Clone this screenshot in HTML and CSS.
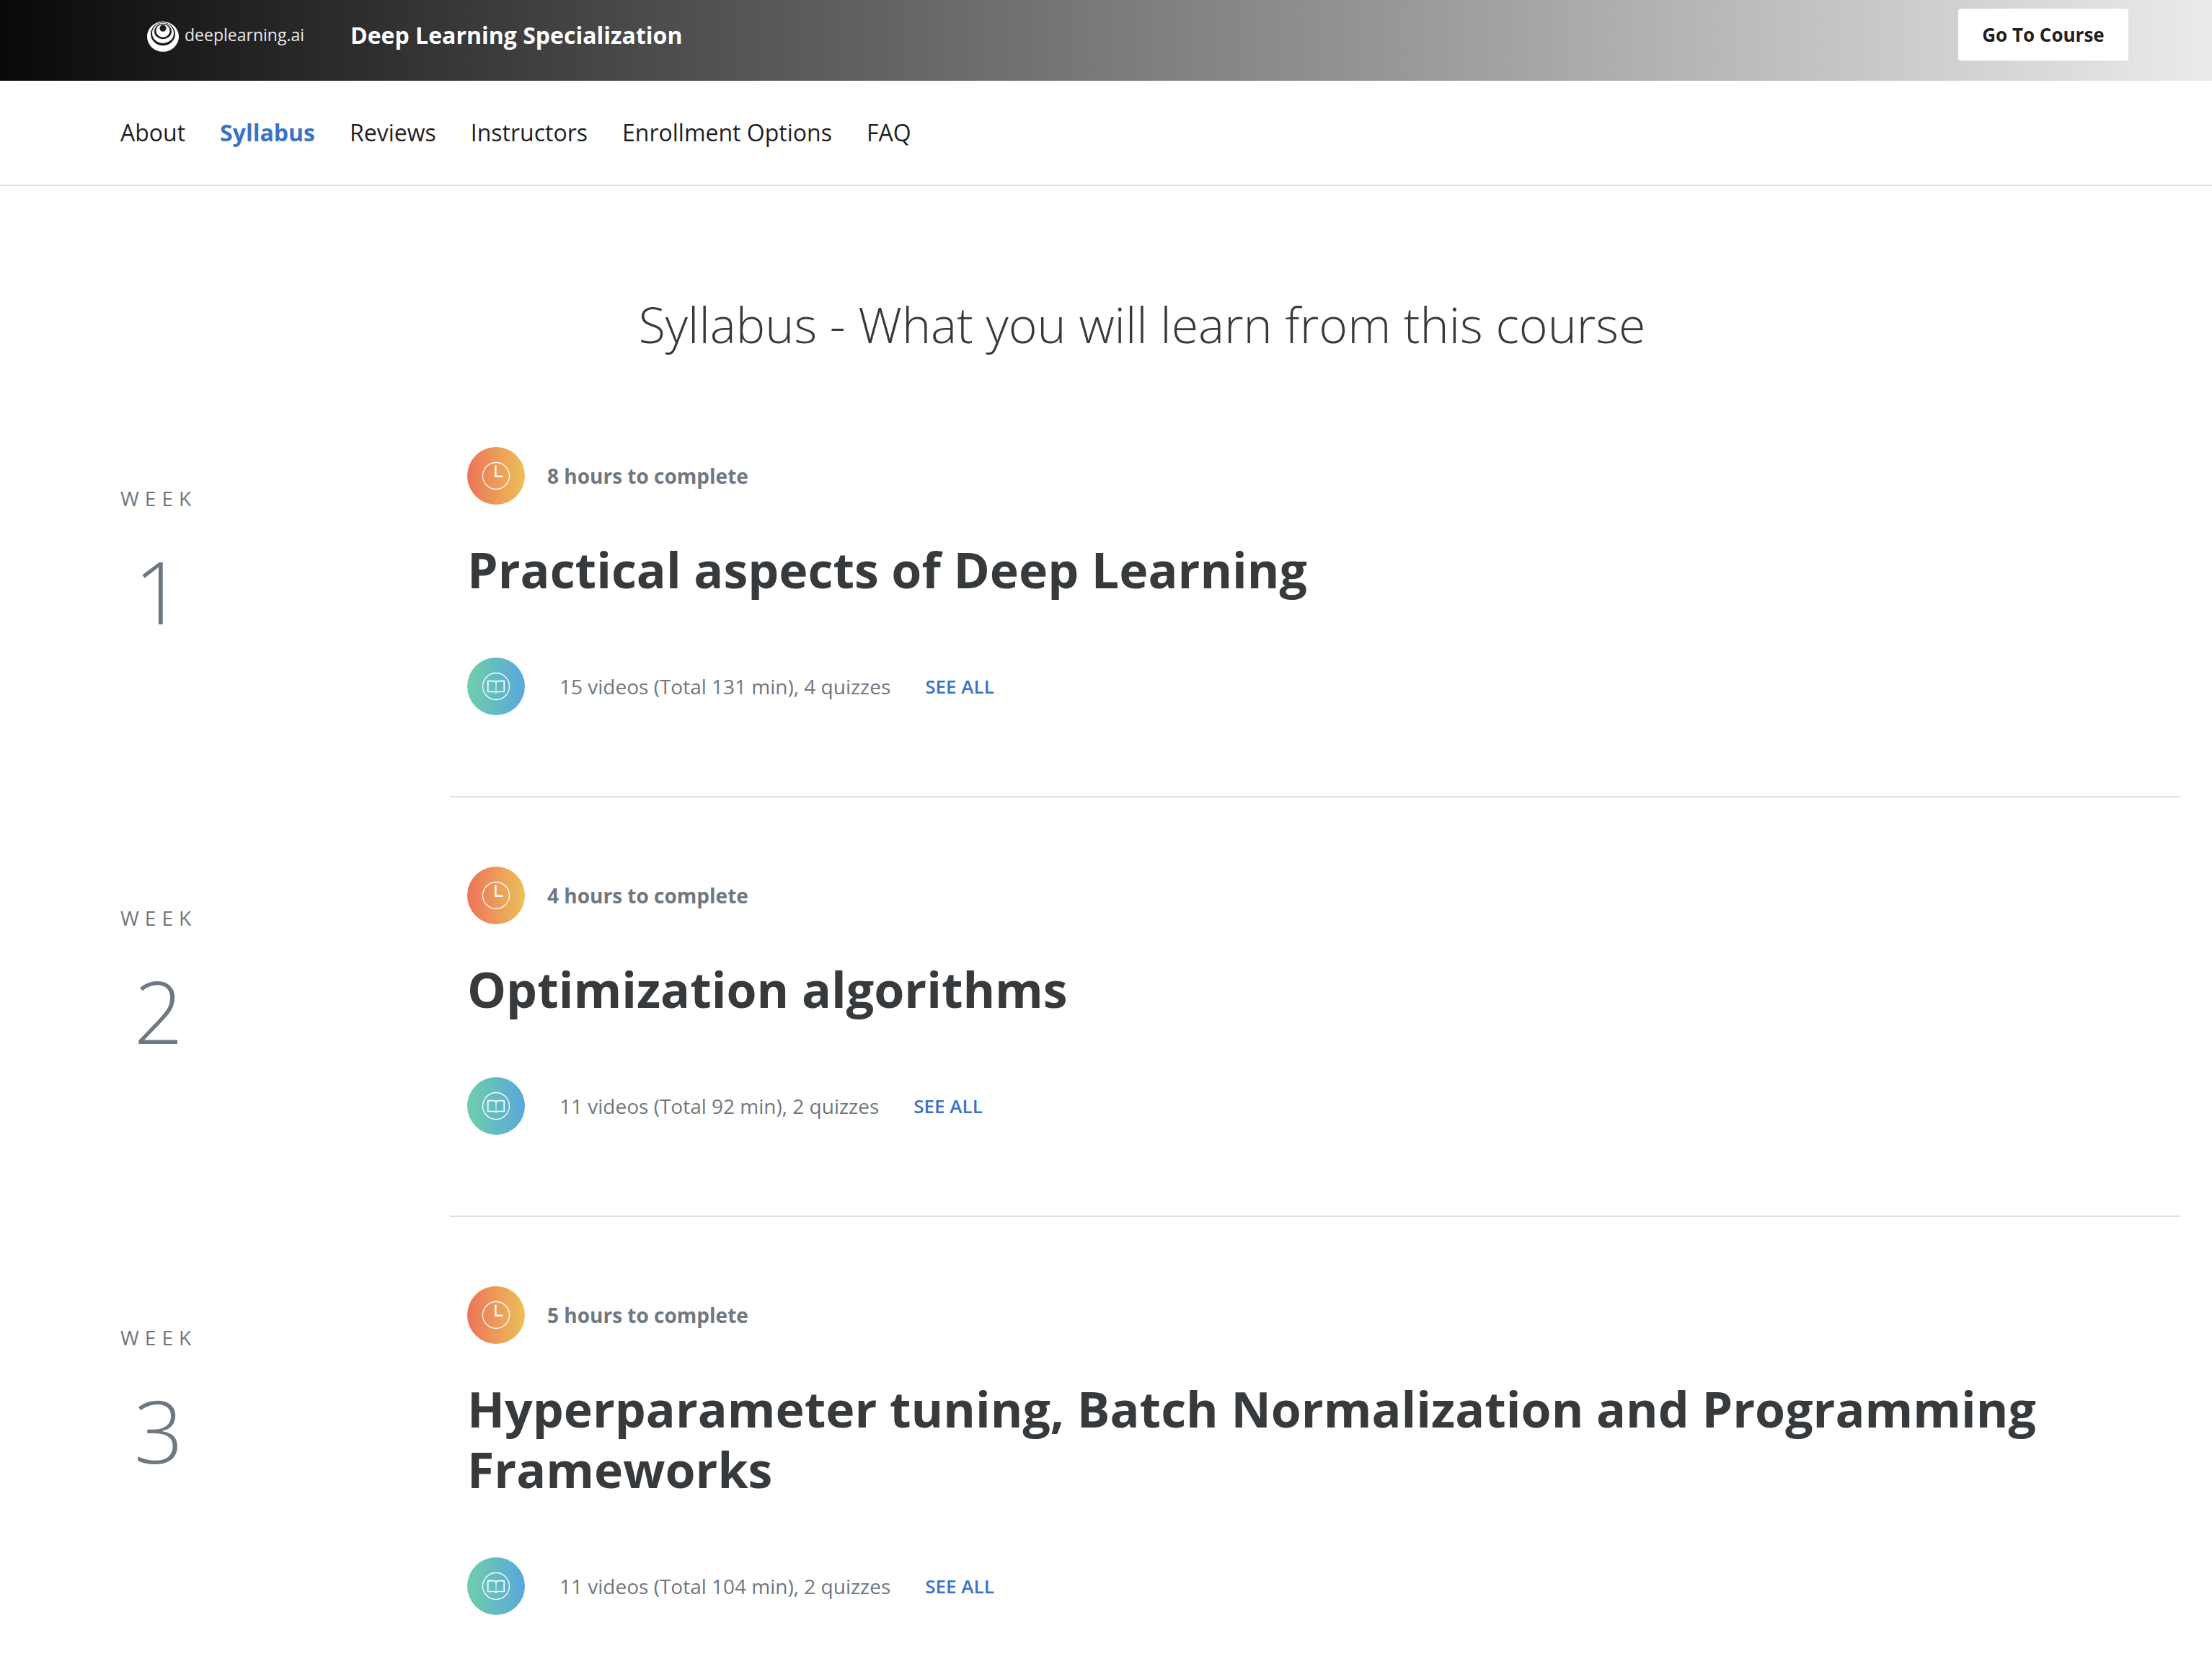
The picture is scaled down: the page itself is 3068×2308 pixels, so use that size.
FILE: index.html
```html
<!DOCTYPE html>
<html lang="en">
<head>
<meta charset="utf-8">
<meta name="viewport" content="width=device-width, initial-scale=1">
<title>Deep Learning Specialization</title>
<link rel="stylesheet" href="styles.css">
</head>
<body>
<svg class="sprite" width="0" height="0" aria-hidden="true">
  <symbol id="clock" viewBox="0 0 80 80">
    <circle cx="40" cy="40" r="18.5" fill="none" stroke="currentColor" stroke-width="1.3"/>
    <path d="M39.4 25.5V40.8H49.5" fill="none" stroke="currentColor" stroke-width="2.4"/>
  </symbol>
  <symbol id="book" viewBox="0 0 80 80">
    <circle cx="40" cy="40" r="18.5" fill="none" stroke="currentColor" stroke-width="1.3"/>
    <path d="M40 34.5Q39.4 32.6 37 32.6H28.8V47.5H37.6Q39.4 47.5 40 48.6Q40.6 47.5 42.4 47.5H51.2V32.6H43Q40.6 32.6 40 34.5Z" fill="none" stroke="currentColor" stroke-width="1.6"/>
    <path d="M40 34V48" stroke="currentColor" stroke-width="1"/>
  </symbol>
</svg>

<header class="banner">
  <a class="brand" href="#">
    <svg class="brand-mark" viewBox="0 0 44 48" aria-hidden="true">
      <ellipse cx="22" cy="26.8" rx="22" ry="21" fill="#fff"/>
      <ellipse cx="22" cy="23.1" rx="17" ry="16.2" fill="#1c1c1c"/>
      <ellipse cx="22" cy="21.9" rx="15" ry="14.1" fill="#fff"/>
      <ellipse cx="22" cy="19.5" rx="12" ry="10.7" fill="#1c1c1c"/>
      <ellipse cx="22" cy="18.7" rx="9.6" ry="9" fill="#fff"/>
      <circle cx="22" cy="15.2" r="4.6" fill="#1c1c1c"/>
    </svg>
    <span>deeplearning.ai</span>
  </a>
  <span class="banner-title">Deep Learning Specialization</span>
  <button class="enroll" type="button">Go To Course</button>
</header>

<nav class="tabs">
  <a href="#">About</a>
  <a class="active" href="#syllabus" aria-current="true">Syllabus</a>
  <a href="#">Reviews</a>
  <a href="#">Instructors</a>
  <a href="#">Enrollment Options</a>
  <a href="#">FAQ</a>
</nav>

<main class="syllabus" id="syllabus">
  <h1>Syllabus - What you will learn from this course</h1>

  <section class="week">
    <div class="week-label"><span class="week-word">WEEK</span><span class="week-number">1</span></div>
    <div class="module">
      <div class="line duration"><svg class="icon warm" aria-hidden="true"><use href="#clock"/></svg><span>8 hours to complete</span></div>
      <h2>Practical aspects of Deep Learning</h2>
      <div class="line contents"><svg class="icon cool" aria-hidden="true"><use href="#book"/></svg><span>15 videos (Total 131 min), 4 quizzes</span><button class="see-all" type="button">SEE ALL</button></div>
    </div>
  </section>

  <section class="week">
    <div class="week-label"><span class="week-word">WEEK</span><span class="week-number">2</span></div>
    <div class="module">
      <div class="line duration"><svg class="icon warm" aria-hidden="true"><use href="#clock"/></svg><span>4 hours to complete</span></div>
      <h2>Optimization algorithms</h2>
      <div class="line contents"><svg class="icon cool" aria-hidden="true"><use href="#book"/></svg><span>11 videos (Total 92 min), 2 quizzes</span><button class="see-all" type="button">SEE ALL</button></div>
    </div>
  </section>

  <section class="week">
    <div class="week-label"><span class="week-word">WEEK</span><span class="week-number">3</span></div>
    <div class="module">
      <div class="line duration"><svg class="icon warm" aria-hidden="true"><use href="#clock"/></svg><span>5 hours to complete</span></div>
      <h2>Hyperparameter tuning, Batch Normalization and Programming Frameworks</h2>
      <div class="line contents"><svg class="icon cool" aria-hidden="true"><use href="#book"/></svg><span>11 videos (Total 104 min), 2 quizzes</span><button class="see-all" type="button">SEE ALL</button></div>
    </div>
  </section>
</main>
</body>
</html>
```
FILE: styles.css
```css
* { box-sizing: border-box; }

body {
  margin: 0;
  background: #fff;
  color: #1f1f1f;
  font-family: "Open Sans", "Noto Sans", sans-serif;
  font-size: 28px;
}

a { color: inherit; text-decoration: none; }
button { border: 0; font-family: inherit; cursor: pointer; }
.sprite { display: block; position: absolute; }

.banner {
  display: flex;
  align-items: center;
  padding: 12px 116px 28px 204px;
  background: linear-gradient(90deg, #090909, #ebebeb);
  color: #fff;
}

.brand {
  display: flex;
  align-items: center;
  gap: 8px;
  font-size: 23px;
  font-weight: 400;
  margin-right: 64px;
}
.brand span { color: #e8e8e8; }
.brand-mark { width: 44px; height: 48px; }

.banner-title { font-size: 32px; font-weight: 700; }

.enroll {
  margin-left: auto;
  width: 236px;
  height: 72px;
  border-radius: 4px;
  background: #fff;
  color: #1f1f1f;
  font-size: 26px;
  font-weight: 700;
}

.tabs {
  display: flex;
  gap: 48px;
  padding: 48px 167px;
  border-bottom: 2px solid #e1e1e1;
  font-size: 32px;
  line-height: 48px;
}
.tabs .active { color: #3b72c8; font-weight: 700; }

.syllabus { padding: 150px 44px 0 144px; }

h1, h2 {
  margin: 0;
  color: #373a3c;
  font-size: 68px;
  line-height: 84px;
}
h1 { font-weight: 300; text-align: center; margin-bottom: 32px; }
h2 { font-weight: 700; margin: 48px 0 80px; }

.week {
  display: grid;
  grid-template-columns: 1fr 5fr;
}

.week-label {
  display: flex;
  flex-direction: column;
  align-items: center;
  justify-self: start;
  gap: 46px;
  padding: 144px 23px 0;
  color: #6f7780;
}
.week-word { letter-spacing: 8px; line-height: 46px; }
.week-number { font-size: 120px; font-weight: 300; line-height: 120px; }

.module {
  padding: 96px 24px 112px;
  border-bottom: 2px solid #e1e1e1;
}
.week:last-child .module { border-bottom: 0; padding-bottom: 64px; }

.line { display: flex; align-items: center; color: #6f7780; }
.duration { gap: 31px; font-weight: 700; }
.contents { gap: 48px; }

.icon { width: 80px; height: 80px; border-radius: 50%; color: #fff; }
.warm { background: linear-gradient(90deg, #ed7359, #ecc058); }
.cool { background: linear-gradient(90deg, #6fcea9, #58a8dc); }

.see-all {
  padding: 0;
  background: none;
  color: #3b72c8;
  font-size: 26px;
  font-weight: 600;
}
```
